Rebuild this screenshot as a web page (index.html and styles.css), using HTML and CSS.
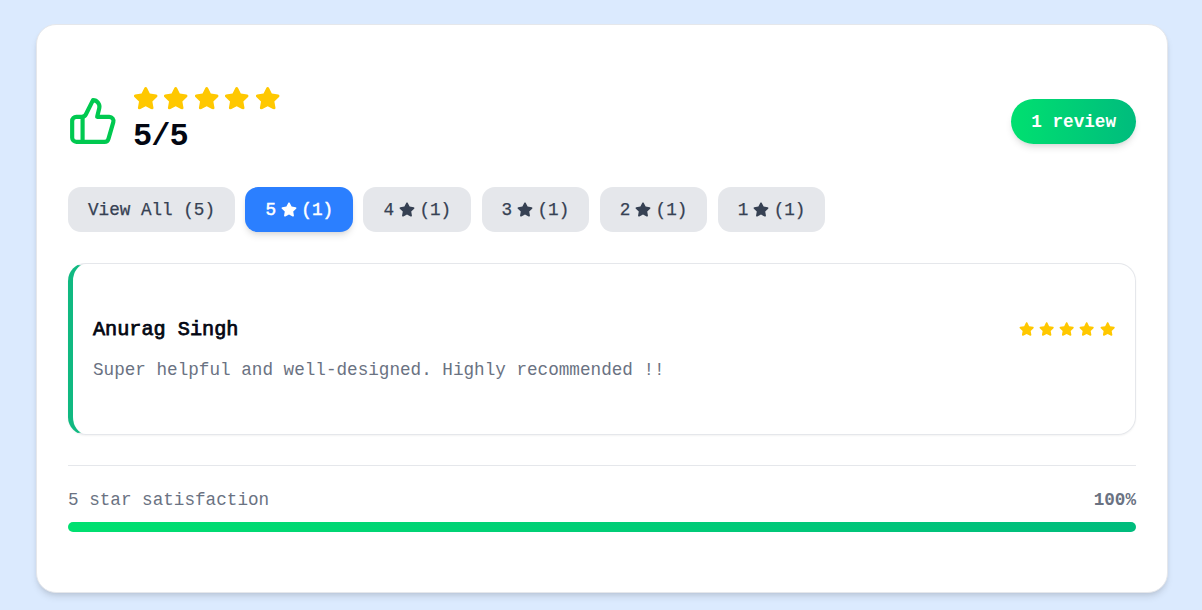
FILE: index.html
```html
<!DOCTYPE html>
<html lang="en">
<head>
<meta charset="utf-8">
<title>Reviews</title>
<link rel="stylesheet" href="styles.css">
</head>
<body>
<svg class="defs" width="0" height="0" aria-hidden="true">
  <symbol id="star" viewBox="0 0 576 512"><path fill="currentColor" d="M259.300 17.800L194 150.200 47.900 171.500c-26.200 3.800-36.700 36.100-17.700 54.600l105.700 103-25 145.500c-4.500 26.300 23.200 46 46.400 33.700L288 439.600l130.700 68.700c23.200 12.200 50.900-7.400 46.400-33.700l-25-145.500 105.700-103c19-18.500 8.500-50.800-17.700-54.600L382 150.200 316.700 17.800c-11.700-23.600-45.600-23.900-57.400 0z"/></symbol>
</svg>
<main class="panel">
  <header class="summary">
    <svg class="thumb" viewBox="0 0 24 24"><path d="M7 10v12"/><path d="M15 5.880 14 10h5.830a2 2 0 0 1 1.920 2.560l-2.330 8A2 2 0 0 1 17.500 22H4a2 2 0 0 1-2-2v-8a2 2 0 0 1 2-2h2.760a2 2 0 0 0 1.790-1.110L12 2a3.130 3.130 0 0 1 3 3.880Z"/></svg>
    <div class="score">
      <div class="stars stars-large"><svg><use href="#star"/></svg><svg><use href="#star"/></svg><svg><use href="#star"/></svg><svg><use href="#star"/></svg><svg><use href="#star"/></svg></div>
      <div class="score-value">5/5</div>
    </div>
    <div class="count">1 review</div>
  </header>
  <nav class="filters">
    <button class="filter">View All (5)</button>
    <button class="filter active">5<svg><use href="#star"/></svg>(1)</button>
    <button class="filter">4<svg><use href="#star"/></svg>(1)</button>
    <button class="filter">3<svg><use href="#star"/></svg>(1)</button>
    <button class="filter">2<svg><use href="#star"/></svg>(1)</button>
    <button class="filter">1<svg><use href="#star"/></svg>(1)</button>
  </nav>
  <article class="review">
    <div class="review-head">
      <h2 class="name">Anurag Singh</h2>
      <div class="stars stars-small"><svg><use href="#star"/></svg><svg><use href="#star"/></svg><svg><use href="#star"/></svg><svg><use href="#star"/></svg><svg><use href="#star"/></svg></div>
    </div>
    <p class="comment">Super helpful and well-designed. Highly recommended !!</p>
  </article>
  <footer class="satisfaction">
    <div class="labels"><span>5 star satisfaction</span><strong>100%</strong></div>
    <div class="bar"></div>
  </footer>
</main>
</body>
</html>
```
FILE: styles.css
```css
* { box-sizing: border-box; }
body {
  margin: 0;
  height: 610px;
  padding: 24px 34px 0 36px;
  overflow: hidden;
  background: #dbeafe;
  color: #030712;
  font: 17.65px/25px "Liberation Mono", monospace;
}
.defs { position: absolute; }
.panel {
  height: 569px;
  padding: 61px 31px 0;
  border: 1px solid #e5e7eb;
  border-radius: 20px;
  background: #fff;
  box-shadow: 0 5px 7.500px -1px rgba(0,0,0,.1), 0 2.500px 5px -2.500px rgba(0,0,0,.1);
}
.summary { display: flex; align-items: center; height: 70px; }
.thumb {
  width: 50px;
  height: 50px;
  fill: none;
  stroke: #00c950;
  stroke-width: 2;
  stroke-linecap: round;
  stroke-linejoin: round;
}
.score { margin-left: 15px; }
.stars { display: flex; color: #ffc800; }
.stars svg { display: block; }
.stars-large { gap: 5px; }
.stars-large svg { width: 25.400px; height: 22.500px; }
.score-value {
  height: 40px;
  margin-top: 5px;
  padding-top: 2px;
  font-size: 32px;
  line-height: 40px;
  font-weight: 700;
  letter-spacing: -.9px;
}
.count {
  margin-left: auto;
  padding: 11px 20px 9px;
  border-radius: 23px;
  color: #fff;
  font-weight: 700;
  background: linear-gradient(90deg, #00e070, #00bc7d);
  box-shadow: 0 5px 7.500px -1px rgba(0,0,0,.1), 0 2.500px 5px -2.500px rgba(0,0,0,.1);
}
.filters { display: flex; gap: 10.350px; margin-top: 31px; }
.filter {
  display: flex;
  align-items: center;
  gap: 4.700px;
  height: 45px;
  padding: 1px 20px 0;
  border: 0;
  border-radius: 13px;
  background: #e5e7eb;
  color: #364153;
  font: inherit;
  -webkit-text-stroke: .25px currentColor;
}
.filter svg { width: 16px; height: 15px; margin-top: -1px; }
.filter.active {
  color: #fff;
  background: #2b7fff;
  box-shadow: 0 5px 7.500px -1px rgba(0,0,0,.1), 0 2.500px 5px -2.500px rgba(0,0,0,.1);
  -webkit-text-stroke-width: .5px;
}
.review {
  height: 172px;
  margin-top: 31px;
  padding: 50px 20px 0;
  border: 1px solid #e5e7eb;
  border-left: 5px solid #10b981;
  border-radius: 18px;
  box-shadow: 0 1px 2px rgba(0,0,0,.05);
}
.review-head { display: flex; justify-content: space-between; align-items: center; height: 31px; }
.name {
  margin: 0;
  font-size: 20.200px;
  line-height: 31px;
  font-weight: 400;
  -webkit-text-stroke: .75px currentColor;
}
.stars-small { gap: 5px; margin-top: -2px; }
.stars-small svg { width: 15.300px; height: 14px; }
.comment { margin: 13px 0 0; color: #6a7282; }
.satisfaction { margin-top: 30px; padding-top: 22px; border-top: 1px solid #e5e7eb; }
.labels { display: flex; justify-content: space-between; color: #6a7282; }
.bar { height: 10px; margin-top: 9px; border-radius: 5px; background: linear-gradient(90deg, #00e070, #00bc7d); }
```
